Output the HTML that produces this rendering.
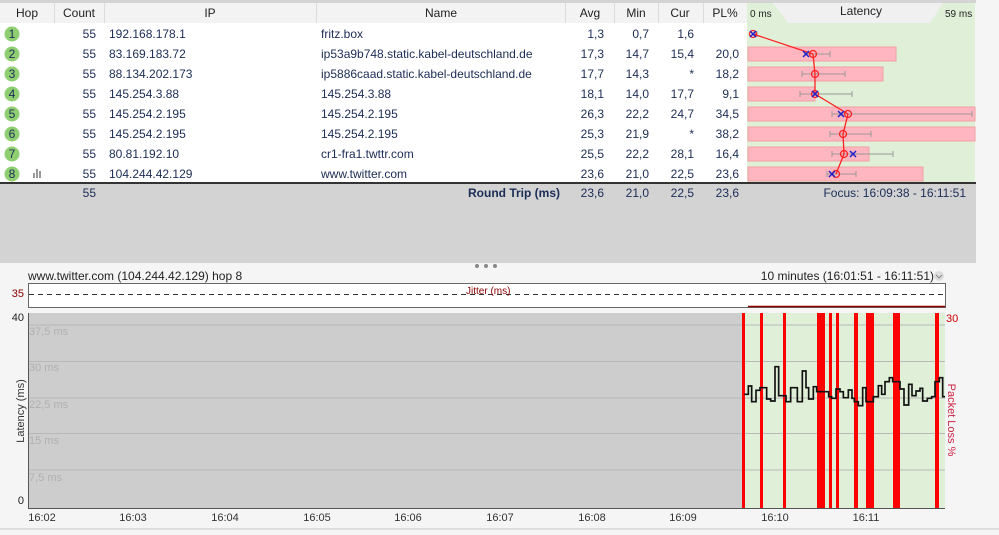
<!DOCTYPE html>
<html><head><meta charset="utf-8"><style>
body{margin:0;width:999px;height:530px;overflow:hidden;background:#f5f5f5;font-family:"Liberation Sans",sans-serif}
svg text{font-family:"Liberation Sans",sans-serif}
</style></head><body>
<svg width="999" height="530" viewBox="0 0 999 530" xmlns="http://www.w3.org/2000/svg">
<rect x="0" y="0" width="999" height="530" fill="#f5f5f5"/>
<rect x="0" y="0" width="976" height="3" fill="#d4d4d4"/>
<!-- header -->
<rect x="0" y="3" width="747" height="20" fill="#f3f3f3"/>
<g stroke="#dcdcdc" stroke-width="1">
<line x1="54.5" y1="3" x2="54.5" y2="23"/><line x1="104.5" y1="3" x2="104.5" y2="23"/>
<line x1="316.5" y1="3" x2="316.5" y2="23"/><line x1="565.5" y1="3" x2="565.5" y2="23"/>
<line x1="614.5" y1="3" x2="614.5" y2="23"/><line x1="658.5" y1="3" x2="658.5" y2="23"/>
<line x1="703.5" y1="3" x2="703.5" y2="23"/>
</g>
<g font-size="12" fill="#222" text-anchor="middle">
<text x="27" y="17">Hop</text><text x="79" y="17">Count</text><text x="210" y="17">IP</text>
<text x="441" y="17">Name</text><text x="590" y="17">Avg</text><text x="636" y="17">Min</text>
<text x="680" y="17">Cur</text><text x="725" y="17">PL%</text>
</g>
<!-- body white -->
<rect x="0" y="23" width="747" height="160" fill="#fff"/>
<!-- latency panel -->
<rect x="747" y="3" width="228" height="180" fill="#e0efd8"/>
<polygon points="773,3 943,3 930,23 788,23" fill="#f0f0f0"/>
<g font-size="10" fill="#222"><text x="750" y="17">0 ms</text><text x="945" y="17">59 ms</text></g>
<text x="861" y="15" font-size="12" fill="#222" text-anchor="middle">Latency</text>
<g fill="#ffb6c1" stroke="#f0a0a0">
<rect x="748" y="47" width="148" height="14"/>
<rect x="748" y="67" width="135" height="14"/>
<rect x="748" y="87" width="67" height="14"/>
<rect x="748" y="107" width="227" height="14"/>
<rect x="748" y="127" width="227" height="14"/>
<rect x="748" y="147" width="121" height="14"/>
<rect x="748" y="167" width="175" height="14"/>
</g>
<g stroke="#999" stroke-width="1" fill="none">
<path d="M752,34H757M757,31V37"/>
<path d="M804,54H830M830,51V57"/>
<path d="M802,74H845M802,71V77M845,71V77"/>
<path d="M800,94H852M800,91V97M852,91V97"/>
<path d="M832,114H972M832,111V117M972,111V117"/>
<path d="M830,134H871M830,131V137M871,131V137"/>
<path d="M832,154H893M832,151V157M893,151V157"/>
<path d="M827,174H856M827,171V177M856,171V177"/>
</g>
<polyline points="753,34 813,54 815,74 815,94 848,114 843,134 844,154 836,174" fill="none" stroke="#f22" stroke-width="1.3"/>
<g fill="none" stroke="#f22" stroke-width="1.3">
<circle cx="753" cy="34" r="3.5"/><circle cx="813" cy="54" r="3.5"/><circle cx="815" cy="74" r="3.5"/>
<circle cx="815" cy="94" r="3.5"/><circle cx="848" cy="114" r="3.5"/><circle cx="843" cy="134" r="3.5"/>
<circle cx="844" cy="154" r="3.5"/><circle cx="836" cy="174" r="3.5"/>
</g>
<g stroke="#22c" stroke-width="1.5">
<path d="M750,31l6,6M756,31l-6,6"/><path d="M803,51l6,6M809,51l-6,6"/><path d="M812,91l6,6M818,91l-6,6"/>
<path d="M838,111l6,6M844,111l-6,6"/><path d="M850,151l6,6M856,151l-6,6"/><path d="M829,171l6,6M835,171l-6,6"/>
</g>
<!-- hop circles -->
<g fill="#8fcf72">
<circle cx="12" cy="34" r="7.5"/><circle cx="12" cy="54" r="7.5"/><circle cx="12" cy="74" r="7.5"/><circle cx="12" cy="94" r="7.5"/>
<circle cx="12" cy="114" r="7.5"/><circle cx="12" cy="134" r="7.5"/><circle cx="12" cy="154" r="7.5"/><circle cx="12" cy="174" r="7.5"/>
</g>
<g font-size="12" fill="#1b2c55" text-anchor="middle">
<text x="12" y="38">1</text><text x="12" y="58">2</text><text x="12" y="78">3</text><text x="12" y="98">4</text>
<text x="12" y="118">5</text><text x="12" y="138">6</text><text x="12" y="158">7</text><text x="12" y="178">8</text>
</g>
<g fill="#999"><rect x="33" y="173" width="2" height="5"/><rect x="36" y="169" width="2" height="9"/><rect x="39" y="171" width="2" height="7"/></g>
<g font-size="12" fill="#1b2c55">
<g text-anchor="end">
<text x="96" y="38">55</text><text x="96" y="58">55</text><text x="96" y="78">55</text><text x="96" y="98">55</text>
<text x="96" y="118">55</text><text x="96" y="138">55</text><text x="96" y="158">55</text><text x="96" y="178">55</text>
<text x="604" y="38">1,3</text><text x="604" y="58">17,3</text><text x="604" y="78">17,7</text><text x="604" y="98">18,1</text>
<text x="604" y="118">26,3</text><text x="604" y="138">25,3</text><text x="604" y="158">25,5</text><text x="604" y="178">23,6</text>
<text x="649" y="38">0,7</text><text x="649" y="58">14,7</text><text x="649" y="78">14,3</text><text x="649" y="98">14,0</text>
<text x="649" y="118">22,2</text><text x="649" y="138">21,9</text><text x="649" y="158">22,2</text><text x="649" y="178">21,0</text>
<text x="694" y="38">1,6</text><text x="694" y="58">15,4</text><text x="694" y="78">*</text><text x="694" y="98">17,7</text>
<text x="694" y="118">24,7</text><text x="694" y="138">*</text><text x="694" y="158">28,1</text><text x="694" y="178">22,5</text>
<text x="739" y="58">20,0</text><text x="739" y="78">18,2</text><text x="739" y="98">9,1</text>
<text x="739" y="118">34,5</text><text x="739" y="138">38,2</text><text x="739" y="158">16,4</text><text x="739" y="178">23,6</text>
</g>
<text x="109" y="38">192.168.178.1</text><text x="109" y="58">83.169.183.72</text><text x="109" y="78">88.134.202.173</text>
<text x="109" y="98">145.254.3.88</text><text x="109" y="118">145.254.2.195</text><text x="109" y="138">145.254.2.195</text>
<text x="109" y="158">80.81.192.10</text><text x="109" y="178">104.244.42.129</text>
<text x="321" y="38">fritz.box</text><text x="321" y="58">ip53a9b748.static.kabel-deutschland.de</text>
<text x="321" y="78">ip5886caad.static.kabel-deutschland.de</text><text x="321" y="98">145.254.3.88</text>
<text x="321" y="118">145.254.2.195</text><text x="321" y="138">145.254.2.195</text>
<text x="321" y="158">cr1-fra1.twttr.com</text><text x="321" y="178">www.twitter.com</text>
</g>
<!-- summary + gray area -->
<rect x="0" y="182" width="976" height="2" fill="#333"/>
<rect x="0" y="184" width="976" height="79" fill="#d3d3d3"/>
<g font-size="12" fill="#1b2c55">
<text x="96" y="197" text-anchor="end">55</text>
<text x="560" y="197" text-anchor="end" font-weight="bold">Round Trip (ms)</text>
<g text-anchor="end"><text x="604" y="197">23,6</text><text x="649" y="197">21,0</text><text x="694" y="197">22,5</text><text x="739" y="197">23,6</text></g>
<text x="966" y="197" text-anchor="end">Focus: 16:09:38 - 16:11:51</text>
</g>
<g fill="#888"><circle cx="477" cy="266" r="2"/><circle cx="486" cy="266" r="2"/><circle cx="495" cy="266" r="2"/></g>
<!-- bottom -->
<text x="28" y="280" font-size="12" fill="#222">www.twitter.com (104.244.42.129) hop 8</text>
<text x="934" y="280" font-size="12" fill="#222" text-anchor="end">10 minutes (16:01:51 - 16:11:51)</text>
<circle cx="939" cy="276" r="5" fill="#ddd"/><path d="M936,275l3,3l3,-3" stroke="#888" fill="none"/>
<rect x="28.5" y="283.5" width="917" height="24" fill="#fff" stroke="#666"/>
<line x1="29" y1="294.5" x2="945" y2="294.5" stroke="#333" stroke-dasharray="5,4"/>
<line x1="748" y1="306.5" x2="945" y2="306.5" stroke="#8b0000" stroke-width="1.5"/>
<text x="466" y="294" font-size="10" fill="#8b0000">Jitter (ms)</text>
<text x="24" y="297" font-size="11" fill="#8b0000" text-anchor="end">35</text>
<rect x="28" y="313" width="917" height="195" fill="#cdcdcd"/>
<rect x="743" y="313" width="202" height="195" fill="#e0efd8"/>
<g stroke="#b8b8b8"><line x1="29" y1="325" x2="945" y2="325"/><line x1="29" y1="361.5" x2="945" y2="361.5"/><line x1="29" y1="398" x2="945" y2="398"/><line x1="29" y1="433.5" x2="945" y2="433.5"/><line x1="29" y1="470" x2="945" y2="470"/></g>
<g font-size="11" fill="#b0b0b0"><text x="29" y="335">37,5 ms</text><text x="29" y="371">30 ms</text><text x="29" y="408">22,5 ms</text><text x="29" y="444">15 ms</text><text x="29" y="481">7,5 ms</text></g>
<g fill="#ff0000">
<rect x="742" y="313" width="3" height="195"/><rect x="760" y="313" width="3" height="195"/><rect x="783" y="313" width="3" height="195"/>
<rect x="817" y="313" width="8" height="195"/><rect x="829" y="313" width="3" height="195"/><rect x="836" y="313" width="3" height="195"/>
<rect x="854" y="313" width="4" height="195"/><rect x="866" y="313" width="8" height="195"/><rect x="893" y="313" width="7" height="195"/>
<rect x="935" y="313" width="4" height="195"/>
</g>
<g transform="translate(700,255) scale(0.33333)">
<polyline fill="none" stroke="#111" stroke-width="5" points="133,418 145,418 145,393 155,393 155,440 168,440 168,406 180,406 180,398 200,398 200,432 212,432 212,438 225,438 225,335 236,335 236,422 258,422 258,440 272,440 272,398 292,398 292,440 307,440 307,348 318,348 318,398 326,398 326,432 340,432 340,395 350,395 350,410 386,410 386,425 395,425 395,430 408,430 408,402 420,402 420,410 430,410 430,428 445,428 445,405 456,405 456,430 463,430 463,440 475,440 475,452 488,452 488,398 498,398 498,440 520,440 520,425 535,425 535,392 545,392 545,418 555,418 555,380 568,380 568,368 578,368 578,380 600,380 600,402 612,402 612,450 626,450 626,388 636,388 636,422 648,422 648,408 660,408 660,400 668,400 668,438 682,438 682,430 695,430 695,425 705,425 705,380 718,380 718,368 728,368 728,425 735,425"/>
</g>
<line x1="28.5" y1="313" x2="28.5" y2="508" stroke="#555"/>
<line x1="28" y1="508.5" x2="945" y2="508.5" stroke="#555"/>
<g font-size="11" fill="#222" text-anchor="end"><text x="24" y="321">40</text><text x="24" y="504">0</text></g>
<text x="946" y="322" font-size="11" fill="#cc0000">30</text>
<text transform="translate(24,411) rotate(-90)" font-size="11" fill="#333" text-anchor="middle">Latency (ms)</text>
<text transform="translate(948,420) rotate(90)" font-size="11" fill="#cc2244" text-anchor="middle">Packet Loss %</text>
<g font-size="11" fill="#333" text-anchor="middle">
<text x="42" y="521">16:02</text><text x="133" y="521">16:03</text><text x="225" y="521">16:04</text><text x="317" y="521">16:05</text>
<text x="408" y="521">16:06</text><text x="500" y="521">16:07</text><text x="592" y="521">16:08</text><text x="683" y="521">16:09</text>
<text x="775" y="521">16:10</text><text x="866" y="521">16:11</text>
</g>
<rect x="0" y="528" width="999" height="2" fill="#ddd"/>
</svg>
</body></html>
